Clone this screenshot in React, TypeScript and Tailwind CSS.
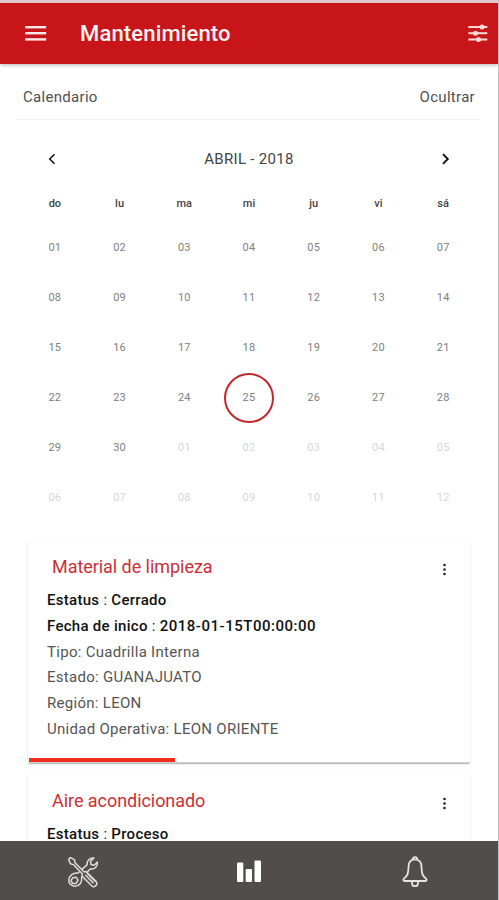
const weekdays = ['do', 'lu', 'ma', 'mi', 'ju', 'vi', 'sá'];

const days = Array.from({ length: 42 }, (_, i) => ({
  label: String(i < 30 ? i + 1 : i - 29).padStart(2, '0'),
  outside: i >= 30,
  selected: i === 24,
}));

function MenuIcon() {
  return (
    <svg width="22" height="16" viewBox="0 0 22 16" fill="#fbe9e7">
      <rect x="0.2" y="0" width="21" height="2.4" />
      <rect x="0.2" y="6" width="21" height="2.4" />
      <rect x="0.2" y="12.2" width="21" height="2.4" />
    </svg>
  );
}

function SlidersIcon() {
  return (
    <svg width="20" height="19" viewBox="0 0 20 19" fill="#fbd9d6">
      <rect x="0.3" y="2" width="19" height="2" />
      <rect x="0.3" y="8.2" width="19" height="2" />
      <rect x="0.3" y="14.5" width="19" height="2" />
      <circle cx="14" cy="3" r="2.5" />
      <circle cx="7.5" cy="9.2" r="2.5" />
      <circle cx="10.5" cy="15.5" r="2.5" />
    </svg>
  );
}

function Chevron({ right = false }: { right?: boolean }) {
  return (
    <svg width="8" height="12" viewBox="0 0 8 12" fill="none" stroke="#111" strokeWidth={right ? 1.9 : 1.5}>
      <path d={right ? 'M1 1.2 5.800 6 1 10.800' : 'M6.500 1.200 1.700 6l4.800 4.800'} />
    </svg>
  );
}

function MoreIcon() {
  return (
    <svg width="4" height="14" viewBox="0 0 4 14" fill="#222">
      <circle cx="1.500" cy="2" r="1.300" />
      <circle cx="1.500" cy="6.500" r="1.300" />
      <circle cx="1.500" cy="11" r="1.300" />
    </svg>
  );
}

function ToolsIcon() {
  return (
    <svg width="32" height="32" viewBox="0 0 32 32" fill="none" stroke="#dedcdb" strokeWidth="1.5" strokeLinejoin="round" strokeLinecap="round">
      <path d="M10.800 17.200 20.200 8.600C19.600 5 22.600 1.400 27 2l-3.600 3.400.6 3.200 3.200.6L30.400 6c.6 4.600-3 7.600-6.800 6.800L14.600 21.400c.8 5-2.200 8.800-6.800 8.800C4 30 1.600 27.200 1.800 24c.2-4.200 4-7.400 9-6.800Z" />
      <path d="m5.600 21.800 3.600-.6 1.800 3-1.800 3.200-3.600.2-1.600-3Z" />
      <path fill="#514d4b" d="m1.600 3.200 1.800-1.600 4 2 .6 3.200 9.200 9.200 1.800-.4 10 9.800c2.600 2.800-1.600 7-4.400 4.400L15 20l.4-2-9-9.400-3-.8Z" />
      <path d="m18.600 19.200 7.400 7.400M20.600 17.600l7 7" />
    </svg>
  );
}

function ChartIcon() {
  return (
    <svg width="26" height="23" viewBox="0 0 26 23" fill="#fff">
      <rect x="1" y="2.500" width="6.300" height="19.500" rx="1" />
      <rect x="9.700" y="9" width="6.300" height="13" rx="1" />
      <rect x="18.500" y="0.500" width="6.500" height="21.500" rx="1" />
    </svg>
  );
}

function BellIcon() {
  return (
    <svg width="26" height="32" viewBox="0 0 26 32" fill="none" stroke="#e6e4e3" strokeWidth="1.800" strokeLinejoin="round">
      <path d="M10.800 3.300a2.200 2.200 0 0 1 4.400 0" />
      <path d="M13 3.300c-4.600 0-6.500 3.300-6.500 7.700 0 6.500-1.200 9-4.700 11.800-.9.900-.4 2.200.8 2.200h20.800c1.200 0 1.700-1.300.8-2.200C20.700 20 19.500 17.500 19.500 11c0-4.400-1.900-7.700-6.500-7.700Z" />
      <path d="M10 25.200v2a3 3 0 0 0 6 0v-2" />
    </svg>
  );
}

function CardTitle({ children }: { children: string }) {
  return (
    <div className="flex h-[28px] items-center justify-between pl-[5px] pr-[23px]">
      <h2 className="text-[18px] font-normal tracking-[-0.050px] text-[#cb2f36]">{children}</h2>
      <div className="pt-[5px]">
        <MoreIcon />
      </div>
    </div>
  );
}

function Status({ label, value, wide = false }: { label: string; value: string; wide?: boolean }) {
  return (
    <p className="text-[#111]">
      <b className="font-medium">{label}</b> :{' '}
      <b className={wide ? 'font-medium tracking-[0.520px]' : 'font-medium'}>{value}</b>
    </p>
  );
}

const cardShadow = 'shadow-[0_1px_2px_rgba(0,0,0,0.22),0_1px_0_rgba(0,0,0,0.12)]';

export default function App() {
  return (
    <div className="flex h-[900px] w-[499px] flex-col overflow-hidden border-r border-[#bdbdbd] bg-white font-['Roboto','Liberation_Sans',sans-serif]">
      <header className="z-10 flex h-[64px] shrink-0 items-center border-t-[3px] border-[#dfc9ca] bg-[#c81519] pl-[25px] pr-[10px] shadow-[0_1px_4px_rgba(0,0,0,0.3)]">
        <MenuIcon />
        <h1 className="ml-[33px] text-[22px] font-medium tracking-[0.160px] text-[#fdf3f2]">Mantenimiento</h1>
        <div className="ml-auto">
          <SlidersIcon />
        </div>
      </header>

      <main className="min-h-0 flex-1 overflow-hidden">
        <div className="ml-[16px] mr-[18px] flex h-[56px] items-center justify-between border-b border-[#f0f0f0] pl-[7px] pr-[5px] pt-[12px] text-[15px] tracking-[0.300px] text-[#505050]">
          <span>Calendario</span>
          <span>Ocultrar</span>
        </div>

        <section className="mx-[22.500px]">
          <div className="flex h-[78px] items-center justify-between px-[25px]">
            <Chevron />
            <span className="pt-px text-[15px] tracking-[0.300px] text-[#444]">ABRIL - 2018</span>
            <Chevron right />
          </div>
          <div className="grid grid-cols-7 text-center text-[11px] font-medium text-[#444]">
            {weekdays.map((d) => (
              <span key={d} className="h-[25px] leading-[12px]">{d}</span>
            ))}
          </div>
          <div className="grid grid-cols-7 text-[11px] tracking-[0.200px]">
            {days.map((d, i) => (
              <div key={i} className="flex h-[50px] items-center justify-center">
                <span
                  className={
                    d.selected
                      ? 'flex size-[50px] shrink-0 items-center justify-center rounded-full border-2 border-[#c4282c] text-[#808080]'
                      : d.outside
                        ? 'text-[#d6d6d6]'
                        : 'text-[#808080]'
                  }
                >
                  {d.label}
                </span>
              </div>
            ))}
          </div>
        </section>

        <section className="mx-[28px] mt-[17px] flex flex-col gap-[10px] text-[15px] leading-[25.800px] tracking-[0.290px] text-[#555]">
          <article className={`flex h-[223px] flex-col rounded-[2px] bg-white ${cardShadow}`}>
            <div className="flex-1 pl-[19px] pt-[13px]">
              <CardTitle>Material de limpieza</CardTitle>
              <div className="pt-[7px]">
                <Status label="Estatus" value="Cerrado" />
                <Status label="Fecha de inico" value="2018-01-15T00:00:00" wide />
                <p>Tipo: Cuadrilla Interna</p>
                <p>Estado: GUANAJUATO</p>
                <p>Región: LEON</p>
                <p>Unidad Operativa: LEON ORIENTE</p>
              </div>
            </div>
            <div className="ml-[0.500px] flex h-[5px] items-end border-b border-[#cfcfcf]">
              <div className="h-[4px] w-[146.500px] bg-[#ee2f1f]" />
            </div>
          </article>
          <article className={`h-[223px] shrink-0 rounded-[2px] bg-white pl-[19px] pt-[14px] ${cardShadow}`}>
            <CardTitle>Aire acondicionado</CardTitle>
            <div className="pt-[7px]">
              <Status label="Estatus" value="Proceso" />
            </div>
          </article>
        </section>
      </main>

      <nav className="z-10 grid h-[59px] shrink-0 grid-cols-3 items-center justify-items-center bg-[#514d4b] pt-[2px]">
        <ToolsIcon />
        <ChartIcon />
        <BellIcon />
      </nav>
    </div>
  );
}
